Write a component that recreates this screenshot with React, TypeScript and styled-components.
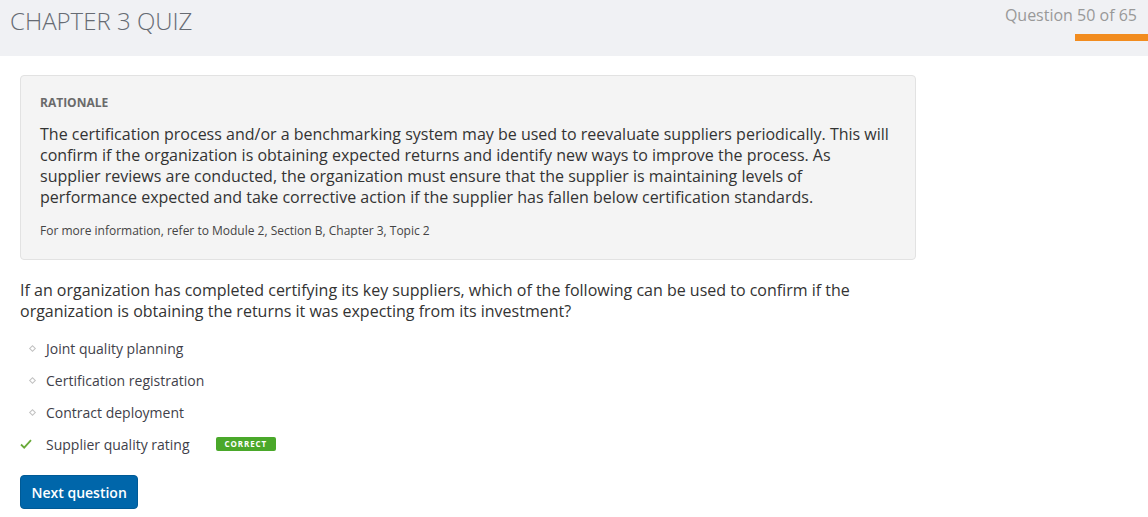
import React from "react";
import styled, { createGlobalStyle } from "styled-components";

const Global = createGlobalStyle`
  html, body { margin: 0; padding: 0; background: #fff; }
  body { font-family: "Open Sans", "Liberation Sans", sans-serif; color: #333; }
`;

const Header = styled.header`
  height: 56px;
  background: #f0f1f4;
  display: flex;
  justify-content: space-between;
  align-items: flex-start;
`;

const Title = styled.h1`
  margin: 0;
  padding: 6px 0 0 10px;
  font-weight: 300;
  font-size: 24px;
  line-height: 30px;
  color: #666b73;
`;

const Progress = styled.div`
  display: flex;
  flex-direction: column;
  align-items: flex-end;
  padding-top: 4px;
`;

const ProgressText = styled.div`
  font-size: 16px;
  line-height: 22px;
  color: #999;
  padding-right: 11px;
`;

const ProgressBar = styled.div<{ $w: number }>`
  margin-top: 8px;
  height: 7px;
  width: ${(p) => p.$w}px;
  background: #f28c1f;
`;

const Main = styled.main`
  padding: 19px 20px 0 20px;
  width: 896px;
`;

const Rationale = styled.section`
  background: #f4f4f4;
  border: 1px solid #e2e2e2;
  border-radius: 4px;
  padding: 19px 25px 20px 19px;
`;

const Label = styled.div`
  font-size: 12px;
  font-weight: 700;
  color: #6a6a6a;
  line-height: 16px;
  margin-bottom: 13px;
`;

const Para = styled.p`
  margin: 0;
  font-size: 16px;
  line-height: 21px;
  color: #333;
`;

const Note = styled.p`
  margin: 15px 0 0;
  font-size: 12px;
  line-height: 16px;
  color: #444;
`;

const Question = styled.p`
  margin: 20px 0 0;
  font-size: 16px;
  line-height: 20.5px;
  color: #333;
  width: 860px;
`;

const Options = styled.ul`
  list-style: none;
  margin: 11px 0 0;
  padding: 0;
`;

const Option = styled.li`
  display: flex;
  align-items: center;
  height: 32px;
  font-size: 14px;
  color: #3f3f4a;
`;

const Marker = styled.span`
  width: 26px;
  display: flex;
  align-items: center;
  justify-content: flex-start;
`;

const Diamond = styled.span`
  display: inline-block;
  width: 3px;
  height: 3px;
  margin-left: 10px;
  border: 1px solid #c2c2c2;
  transform: rotate(45deg);
`;

const Badge = styled.span`
  margin-left: 26px;
  background: #4aa82a;
  color: #fff;
  font-size: 8px;
  font-weight: 700;
  letter-spacing: 0.9px;
  line-height: 14px;
  height: 14px;
  padding: 0 9px;
  border-radius: 2px;
  margin-top: -1px;
`;

const Button = styled.button`
  margin-top: 15px;
  background: #0066aa;
  color: #fff;
  border: 1px solid #005a96;
  border-radius: 4px;
  font-family: "Open Sans", "Liberation Sans", sans-serif;
  font-size: 14px;
  font-weight: 600;
  height: 34px;
  padding: 0 10.5px;
  cursor: pointer;
`;

const Check = () => (
  <svg width="12" height="10" viewBox="0 0 12 10">
    <path d="M1 5.5 L4.2 8.6 L11 1.2" fill="none" stroke="#6aaa3a" strokeWidth="1.8" />
  </svg>
);

const options = [
  { text: "Joint quality planning", correct: false },
  { text: "Certification registration", correct: false },
  { text: "Contract deployment", correct: false },
  { text: "Supplier quality rating", correct: true },
];

export default function App() {
  return (
    <>
      <Global />
      <Header>
        <Title>CHAPTER 3 QUIZ</Title>
        <Progress>
          <ProgressText>Question 50 of 65</ProgressText>
          <ProgressBar $w={73} />
        </Progress>
      </Header>
      <Main>
        <Rationale>
          <Label>RATIONALE</Label>
          <Para>
            The certification process and/or a benchmarking system may be used to reevaluate suppliers periodically. This will
            confirm if the organization is obtaining expected returns and identify new ways to improve the process. As
            supplier reviews are conducted, the organization must ensure that the supplier is maintaining levels of
            performance expected and take corrective action if the supplier has fallen below certification standards.
          </Para>
          <Note>For more information, refer to Module 2, Section B, Chapter 3, Topic 2</Note>
        </Rationale>
        <Question>
          If an organization has completed certifying its key suppliers, which of the following can be used to confirm if the
          organization is obtaining the returns it was expecting from its investment?
        </Question>
        <Options>
          {options.map((o) => (
            <Option key={o.text}>
              <Marker>{o.correct ? <Check /> : <Diamond />}</Marker>
              {o.text}
              {o.correct && <Badge>CORRECT</Badge>}
            </Option>
          ))}
        </Options>
        <Button>Next question</Button>
      </Main>
    </>
  );
}
